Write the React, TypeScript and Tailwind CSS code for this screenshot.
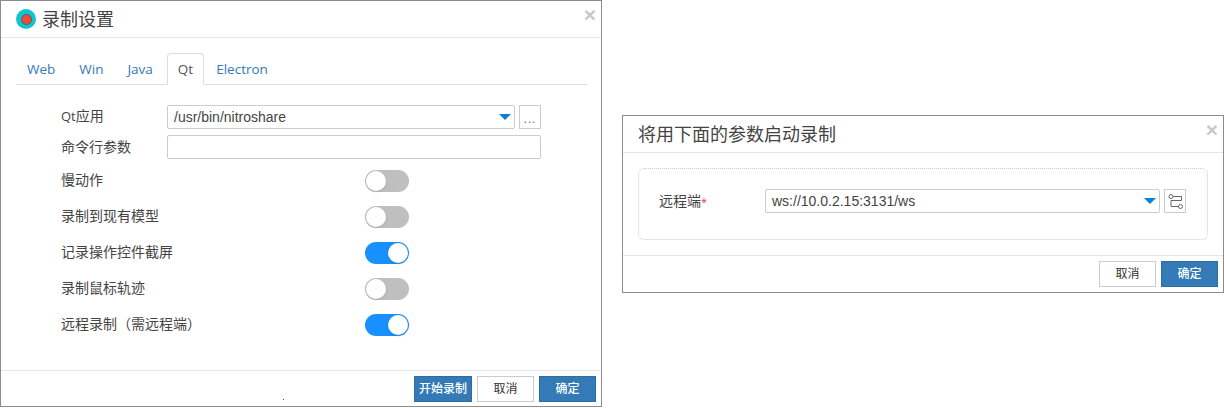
import React from 'react';

const cjk = "font-['Open_Sans','Noto_Sans_CJK_SC',sans-serif]";
const arial = "font-['Liberation_Sans','Noto_Sans_CJK_SC',sans-serif]";

const Caret = () => <span className="w-0 h-0 border-x-[6px] border-x-transparent border-t-[6px] border-t-[#0a7fd6]" />;

const Toggle = ({ on }: { on?: boolean }) => (
    <span className={`flex w-[44px] h-[22px] rounded-full p-[1px] ${on ? 'bg-[#1890ff] justify-end' : 'bg-[#bfbfbf] justify-start'}`}>
        <span className="w-[20px] h-[20px] rounded-full bg-white shadow-sm" />
    </span>
);

const Close = ({ className }: { className: string }) => (
    <span className={`text-[#c8c8c8] font-bold text-[21px] leading-none font-['Liberation_Sans',sans-serif] ${className}`}>×</span>
);

const Btn = ({ children, primary, w }: { children: React.ReactNode; primary?: boolean; w: string }) => (
    <button className={`h-[26px] ${w} text-[12px] leading-none ${cjk} ${primary ? 'bg-[#337ab7] border border-[#2e6da4] text-white font-medium' : 'bg-white border border-[#ccc] text-[#333]'}`}>
        {children}
    </button>
);

const settings: { label: string; on: boolean }[] = [
    { label: '慢动作', on: false },
    { label: '录制到现有模型', on: false },
    { label: '记录操作控件截屏', on: true },
    { label: '录制鼠标轨迹', on: false },
    { label: '远程录制（需远程端）', on: true },
];

const tabs = ['Web', 'Win', 'Java', 'Qt', 'Electron'];

const RecordSettings = () => (
    <div className={`relative flex flex-col w-[602px] h-[407px] bg-white border border-[#8c8c8c] shrink-0 ${cjk}`}>
        <div className="flex items-center h-[37px] pl-[15px] border-b border-[#e5e5e5] relative">
            <span className="flex items-center justify-center w-[20px] h-[20px] rounded-full bg-[#12c4cc] mr-[6px]">
                <span className="w-[11px] h-[11px] rounded-full bg-[#f04a3c] border border-[#5a5a5a]" />
            </span>
            <span className="text-[18px] text-[#444] leading-none">录制设置</span>
            <Close className="absolute right-[5px] top-[3px]" />
        </div>
        <div className="flex-1 pl-[15px] pr-[14px] pt-[15px]">
            <div className="flex h-[32px] border-b border-[#ddd] text-[13.5px]">
                {tabs.map((t) =>
                    t === 'Qt' ? (
                        <span key={t} className="flex items-center ml-[2px] px-[10px] pt-[1px] h-[32px] bg-white border border-[#ddd] border-b-white rounded-t-[4px] text-[#555]">
                            {t}
                        </span>
                    ) : (
                        <span key={t} className="flex items-center px-[12px] pt-[2px] h-[31px] text-[#337ab7] first:ml-[-1px]">
                            {t}
                        </span>
                    ),
                )}
            </div>
            <div className="flex items-center mt-[20px] h-[24px]">
                <span className="w-[151px] pl-[45px] pb-[2px] text-[14px] text-[#444]">
                    <span className="text-[13px]">Qt</span>应用
                </span>
                <div className={`flex items-center justify-between w-[348px] h-[24px] pl-[6px] pr-[3px] border border-[#ccc] rounded-[2px] text-[14px] text-[#444] ${arial}`}>
                    /usr/bin/nitroshare
                    <Caret />
                </div>
                <span className="flex items-center justify-center w-[22px] h-[24px] ml-[4px] pt-[4px] border border-[#ccc] text-[12px] tracking-[1px] text-[#777] leading-none">...</span>
            </div>
            <div className="flex items-center mt-[6px] h-[24px]">
                <span className="w-[151px] pl-[45px] pb-[2px] text-[14px] text-[#444]">命令行参数</span>
                <div className="w-[374px] h-[24px] border border-[#ccc] rounded-[2px]" />
            </div>
            <div className="flex flex-col gap-[14px] mt-[11px]">
                {settings.map((s) => (
                    <div key={s.label} className="flex items-center h-[22px]">
                        <span className="w-[349px] pl-[45px] pb-[4px] text-[14px] text-[#444]">{s.label}</span>
                        <Toggle on={s.on} />
                    </div>
                ))}
            </div>
        </div>
        <div className="flex items-center justify-end gap-[5px] h-[36px] pr-[5px] border-t border-[#e5e5e5] relative">
            <span className="absolute left-[282px] top-[28px] w-px h-px bg-[#555]" />
            <Btn primary w="w-[58px]">开始录制</Btn>
            <Btn w="w-[57px]">取消</Btn>
            <Btn primary w="w-[57px]">确定</Btn>
        </div>
    </div>
);

const StartParams = () => (
    <div className={`relative flex flex-col w-[602px] h-[178px] mt-[115px] bg-white border border-[#8c8c8c] shrink-0 ${cjk}`}>
        <div className="flex items-center h-[37px] pl-[15px] border-b border-[#e5e5e5] relative">
            <span className="text-[18px] text-[#444] leading-none">将用下面的参数启动录制</span>
            <Close className="absolute right-[5px] top-[3px]" />
        </div>
        <div className="flex-1 px-[15px] pt-[15px]">
            <div className="flex items-center h-[72px] pb-[6px] border border-dotted border-[#ccc] rounded-[6px] pl-[20px]">
                <span className="w-[106px] pb-[2px] text-[14px] text-[#444]">
                    远程端<span className="text-[11px] text-[#e53935]">*</span>
                </span>
                <div className={`flex items-center justify-between w-[395px] h-[24px] pl-[6px] pr-[3px] border border-[#ccc] rounded-[2px] text-[14px] text-[#444] ${arial}`}>
                    ws://10.0.2.15:3131/ws
                    <Caret />
                </div>
                <span className="flex items-center justify-center w-[22px] h-[24px] ml-[4px] border border-[#ccc]">
                    <svg width="16" height="16" viewBox="0 0 16 16" fill="none" stroke="#666" strokeWidth="1">
                        <circle cx="4" cy="3.5" r="2" />
                        <path d="M6 3.5H14.5V7.5H4V13.5H11.5" />
                        <circle cx="13.5" cy="13.5" r="2" />
                    </svg>
                </span>
            </div>
        </div>
        <div className="flex items-center justify-end gap-[5px] h-[37px] pr-[5px] border-t border-[#e5e5e5]">
            <Btn w="w-[57px]">取消</Btn>
            <Btn primary w="w-[57px]">确定</Btn>
        </div>
    </div>
);

const App: React.FC = () => {
    return (
        <div className="flex items-start gap-[20px] w-[1224px] h-[408px] bg-white overflow-hidden">
            <RecordSettings />
            <StartParams />
        </div>
    );
};

export default App;
